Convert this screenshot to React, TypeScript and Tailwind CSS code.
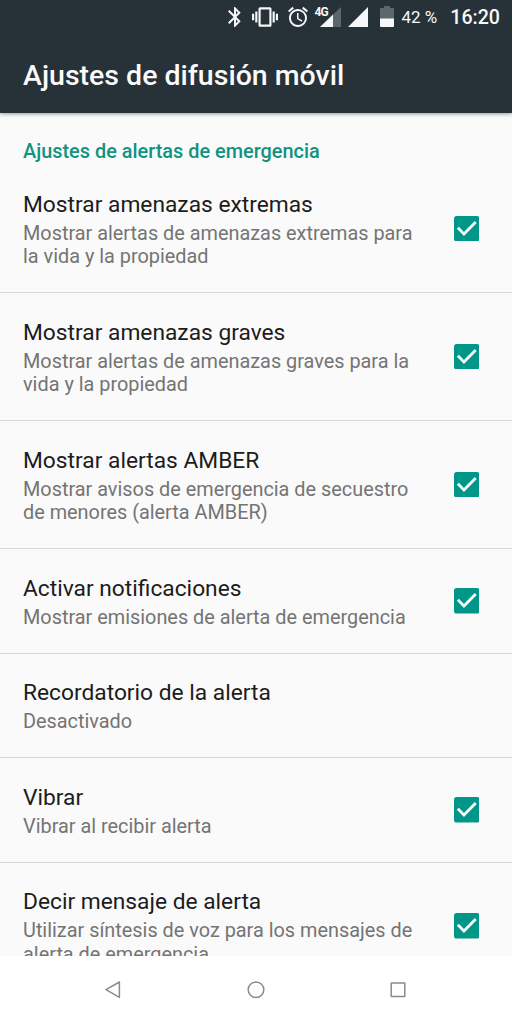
import { MdAlarm, MdBluetooth, MdVibration } from 'react-icons/md'

type Setting = {
  title: string
  lines: string[]
  checked?: boolean
}

const settings: Setting[] = [
  { title: 'Mostrar amenazas extremas', lines: ['Mostrar alertas de amenazas extremas para', 'la vida y la propiedad'], checked: true },
  { title: 'Mostrar amenazas graves', lines: ['Mostrar alertas de amenazas graves para la', 'vida y la propiedad'], checked: true },
  { title: 'Mostrar alertas AMBER', lines: ['Mostrar avisos de emergencia de secuestro', 'de menores (alerta AMBER)'], checked: true },
  { title: 'Activar notificaciones', lines: ['Mostrar emisiones de alerta de emergencia'], checked: true },
  { title: 'Recordatorio de la alerta', lines: ['Desactivado'] },
  { title: 'Vibrar', lines: ['Vibrar al recibir alerta'], checked: true },
  { title: 'Decir mensaje de alerta', lines: ['Utilizar síntesis de voz para los mensajes de', 'alerta de emergencia'], checked: true },
]

function StatusBar() {
  return (
    <div className="flex h-[34px] items-center justify-end pr-[12px] text-[#f5f7f8]">
      <MdBluetooth className="size-6" />
      <MdVibration className="ml-[5px] size-[26px]" />
      <MdAlarm className="ml-[8px] size-6" />
      <div className="relative ml-[10px] h-5 w-[21px]">
        <svg viewBox="0 0 21 20" className="size-full">
          <path d="M21 0v20H0z" fill="#5d666a" />
          <path d="M13 7.6V20H0z" fill="currentColor" />
          <path d="M0 0h8v10H0z" fill="#263238" />
        </svg>
        <span className="absolute -top-[2px] -left-[5px] text-[12px] leading-[14px] font-bold tracking-[-1px]">4G</span>
      </div>
      <svg viewBox="0 0 20 20" className="ml-[7px] size-5">
        <path d="M20 0v20H0z" fill="currentColor" />
      </svg>
      <svg viewBox="0 0 14 21" className="-mt-px ml-[12px] h-[21px] w-[14px]">
        <path d="M4 0h6v2h3q1 0 1 1v10H0V3q0-1 1-1h3z" fill="#5d666a" />
        <path d="M0 12.5h14V20q0 1-1 1H1q-1 0-1-1z" fill="currentColor" />
      </svg>
      <span className="ml-[8px] pt-px text-[17px] whitespace-nowrap">42 %</span>
      <span className="ml-[13px] pt-px text-[19.6px] font-medium">16:20</span>
    </div>
  )
}

function Checkbox() {
  return (
    <svg viewBox="3 3 18 18" className="size-[25.6px]">
      <rect x="3" y="3" width="18" height="18" rx="2" fill="#009688" />
      <path d="M10 17l-5-5 1.41-1.41L10 14.17l7.59-7.59L19 8z" fill="#fafafa" />
    </svg>
  )
}

function SettingRow({ title, lines, checked }: Setting) {
  return (
    <li className="flex shrink-0 items-center justify-between border-b border-[#d8d8d8] pr-[32.8px] pl-[23px]">
      <div className="pt-[24.5px] pb-[23.5px]">
        <h2 className="mb-[3px] text-[22.75px] leading-[29px] whitespace-nowrap text-[#1c1c1c]">{title}</h2>
        {lines.map((line) => (
          <p key={line} className="text-[19.87px] leading-[23.5px] whitespace-nowrap text-[#747474]">{line}</p>
        ))}
      </div>
      {checked && <Checkbox />}
    </li>
  )
}

export default function App() {
  return (
    <div className="flex h-[1024px] w-[512px] flex-col overflow-hidden bg-[#fafafa] font-[Roboto,sans-serif]">
      <header className="z-10 h-[113px] shrink-0 bg-[#263238] shadow-[0_1px_4px_rgba(0,0,0,0.4)]">
        <StatusBar />
        <h1 className="mt-[25px] pl-[23px] text-[28.5px] leading-[34px] font-medium text-[#fafafa]">Ajustes de difusión móvil</h1>
      </header>

      <main className="min-h-0 flex-1 overflow-hidden">
        <h3 className="mb-px pt-[27px] pl-[23px] text-[19.9px] leading-[24px] font-medium text-[#10937f]">Ajustes de alertas de emergencia</h3>
        <ul className="flex flex-col">
          {settings.map((setting) => (
            <SettingRow key={setting.title} {...setting} />
          ))}
        </ul>
      </main>

      <nav className="flex h-[68px] shrink-0 items-center justify-between bg-white pr-[104px] pl-[102px] text-[#8b8b8b]">
        <svg viewBox="0 0 20 20" className="size-5" fill="none" stroke="currentColor" strokeWidth="1.5" strokeLinejoin="round">
          <path d="M17.4 2v15.4L4 9.7z" />
        </svg>
        <svg viewBox="0 0 20 20" className="size-5" fill="none" stroke="currentColor" strokeWidth="1.5">
          <circle cx="11" cy="9.7" r="7.8" />
        </svg>
        <svg viewBox="0 0 20 20" className="size-5" fill="none" stroke="currentColor" strokeWidth="1.5">
          <rect x="3.2" y="3" width="13.6" height="13.6" rx="0.5" />
        </svg>
      </nav>
    </div>
  )
}
